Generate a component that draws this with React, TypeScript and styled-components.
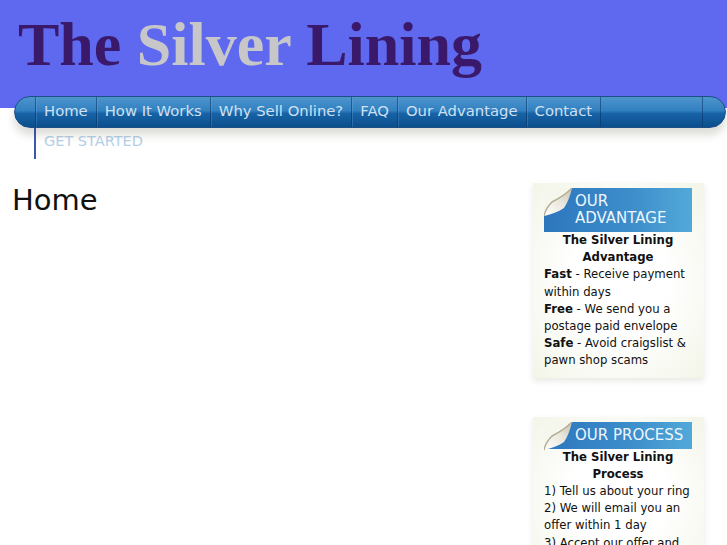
import styled, { createGlobalStyle } from 'styled-components'

const GlobalStyle = createGlobalStyle`
  html, body {
    margin: 0;
    padding: 0;
    background: #ffffff;
    overflow: hidden;
  }
  body {
    font-family: "DejaVu Sans", Verdana, sans-serif;
  }
`

const navItems = [`Home`, `How It Works`, `Why Sell Online?`, `FAQ`, `Our Advantage`, `Contact`]

interface IPaperCurlProps {
  id: string
}

const PaperCurl = ({ id }: IPaperCurlProps) => (
  <CurlSvg width="30" height="30" viewBox="0 0 30 30">
    <defs>
      <linearGradient id={id} x1="0" y1="1" x2="1" y2="0">
        <stop offset="0" stopColor="#ffffff" />
        <stop offset="0.55" stopColor="#e9e7dc" />
        <stop offset="1" stopColor="#c9c3b0" />
      </linearGradient>
    </defs>
    <path d="M0 0 H28 L0 28 Z" fill="#f5f6ec" />
    <path d="M28 0 C22 6 16 10 8 14 C4 18 1 23 0 28 C8 26 14 24 20 20 C24 14 26 8 28 0 Z" fill={`url(#${id})`} />
    <path d="M28 0 C22 6 16 10 8 14 C4 18 1 23 0 28" fill="none" stroke="#b3ab94" strokeWidth="1.4" />
  </CurlSvg>
)

interface ISideBoxProps {
  id: string
  title: string
  children: React.ReactNode
}

const SideBox = ({ id, title, children }: ISideBoxProps) => (
  <Box>
    <BoxHeader>
      <PaperCurl id={id} />
      {title}
    </BoxHeader>
    <BoxBody>{children}</BoxBody>
  </Box>
)

export default function App() {
  return (
    <>
      <GlobalStyle />
      <Header>
        <Logo>
          <Dark>The</Dark> <Silver>Silver</Silver> <Dark>Lining</Dark>
        </Logo>
      </Header>
      <NavWrap>
        <Nav>
          <NavCap />
          {navItems.map((item) => (
            <NavItem key={item}>{item}</NavItem>
          ))}
          <NavFiller />
          <NavEnd />
        </Nav>
        <Dropdown>GET STARTED</Dropdown>
      </NavWrap>
      <Content>
        <Main>
          <Title>Home</Title>
        </Main>
        <Sidebar>
          <SideBox id="curl-a" title="OUR ADVANTAGE">
            <BoxLead>The Silver Lining Advantage</BoxLead>
            <BoxLine>
              <b>Fast</b> - Receive payment within days
            </BoxLine>
            <BoxLine>
              <b>Free</b> - We send you a postage paid envelope
            </BoxLine>
            <BoxLine>
              <b>Safe</b> - Avoid craigslist &amp; pawn shop scams
            </BoxLine>
          </SideBox>
          <SideBox id="curl-b" title="OUR PROCESS">
            <BoxLead>The Silver Lining Process</BoxLead>
            <BoxLine>1) Tell us about your ring</BoxLine>
            <BoxLine>2) We will email you an offer within 1 day</BoxLine>
            <BoxLine>3) Accept our offer and get paid</BoxLine>
          </SideBox>
        </Sidebar>
      </Content>
    </>
  )
}

const Header = styled.header`
  height: 108px;
  box-sizing: border-box;
  padding: 10px 0 0 18px;
  background: #5f69ef;
`

const Logo = styled.h1`
  margin: 0;
  font-family: "Liberation Serif", "Times New Roman", serif;
  font-weight: bold;
  font-size: 62px;
  line-height: 1.1;
`

const Dark = styled.span`
  color: #3a186a;
`

const Silver = styled.span`
  color: #c7c7c9;
`

const NavWrap = styled.div`
  position: relative;
  margin: -12px 1px 0 14px;
`

const Nav = styled.nav`
  position: relative;
  z-index: 2;
  display: flex;
  height: 32px;
  box-sizing: border-box;
  border: 1px solid #1d4f86;
  border-radius: 16px;
  background: linear-gradient(#4d95cc 0%, #3280c1 45%, #1763a6 55%, #0b4e8c 100%);
  box-shadow: 0 7px 9px rgba(60, 60, 40, 0.18);
  overflow: hidden;
`

const NavCap = styled.div`
  width: 20px;
`

const NavItem = styled.a`
  display: flex;
  align-items: center;
  padding: 0 8px 3px;
  border-left: 1px solid rgba(10, 50, 100, 0.55);
  box-shadow: inset 1px 0 0 rgba(130, 180, 225, 0.25);
  color: #cfe0f1;
  font-size: 14.8px;
  white-space: nowrap;
`

const NavFiller = styled.div`
  flex: 1;
  border-left: 1px solid rgba(10, 50, 100, 0.55);
`

const NavEnd = styled.div`
  width: 22px;
  border-left: 1px solid rgba(10, 50, 100, 0.55);
`

const Dropdown = styled.div`
  position: absolute;
  z-index: 1;
  top: 31px;
  left: 20px;
  height: 32px;
  padding: 5px 0 0 8px;
  box-sizing: border-box;
  border-left: 2px solid #3a58ad;
  color: #b3d0ea;
  font-size: 14.5px;
  line-height: 19px;
`

const Content = styled.div`
  display: flex;
  align-items: flex-start;
  padding-top: 55px;
`

const Main = styled.main`
  flex: 1;
  padding-left: 12px;
`

const Title = styled.h2`
  margin: 0;
  font-weight: normal;
  font-size: 29px;
  color: #111111;
`

const Sidebar = styled.aside`
  display: flex;
  flex-direction: column;
  gap: 39px;
  width: 171px;
  margin-right: 23px;
`

const Box = styled.section`
  padding: 5px 12px 8px 11px;
  background: radial-gradient(ellipse at 50% 50%, #ffffff 40%, #f3f5e8 100%);
  box-shadow: 0 3px 6px rgba(90, 90, 70, 0.14);
`

const BoxHeader = styled.h3`
  position: relative;
  margin: 0;
  padding: 5px 4px 5px 31px;
  background: linear-gradient(90deg, #2d76bd 0%, #3d8ecb 60%, #52a9d8 100%);
  color: #eef6fd;
  font-weight: normal;
  font-size: 15px;
  line-height: 17px;
`

const CurlSvg = styled.svg`
  position: absolute;
  top: 0;
  left: 0;
`

const BoxBody = styled.div`
  color: #111111;
  font-size: 11.7px;
  line-height: 17.2px;
`

const BoxLead = styled.div`
  font-weight: bold;
  text-align: center;
`

const BoxLine = styled.div``
